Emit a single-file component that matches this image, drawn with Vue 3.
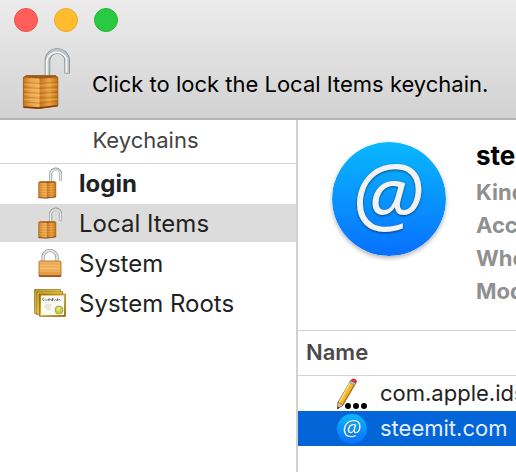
<template>
  <div class="window">
    <svg class="defs" aria-hidden="true">
      <defs>
        <linearGradient id="brass" x1="0" x2="1">
          <stop offset="0" stop-color="#c5761d" />
          <stop offset="0.2" stop-color="#e9a246" />
          <stop offset="0.44" stop-color="#f2b45c" />
          <stop offset="0.5" stop-color="#c97820" />
          <stop offset="0.75" stop-color="#e9a343" />
          <stop offset="1" stop-color="#c06f14" />
        </linearGradient>
        <linearGradient id="front" x1="0" y1="0" x2="0" y2="1">
          <stop offset="0" stop-color="#f2b05a" />
          <stop offset="0.5" stop-color="#f9c06f" />
          <stop offset="1" stop-color="#dd9138" />
        </linearGradient>
        <linearGradient id="sky" x1="0" y1="0" x2="0" y2="1">
          <stop offset="0" stop-color="#09b8fd" />
          <stop offset="1" stop-color="#0870ff" />
        </linearGradient>
        <linearGradient id="gold" x1="0" y1="0" x2="1" y2="1">
          <stop offset="0" stop-color="#a57c08" />
          <stop offset="0.5" stop-color="#e5b832" />
          <stop offset="1" stop-color="#98700a" />
        </linearGradient>
        <symbol id="lock-open" viewBox="0 0 48 64">
          <path d="M25.500 30V14a10 10 0 0 1 20 0V27" fill="none" stroke="#7d8587" stroke-width="5.600" />
          <path d="M25.500 30V14a10 10 0 0 1 20 0V26.500" fill="none" stroke="#bcc4c6" stroke-width="4.200" />
          <path d="M24.800 30V14a10.500 10.500 0 0 1 20 -2V26" fill="none" stroke="#f5f8f8" stroke-width="1.800" />
          <path d="M1 31l3-2h30l2 2v29l-19 2.500L1 61.500z" fill="url(#brass)" stroke="#9b5513" stroke-width="0.800" />
          <path d="M1 31l3-2h30l2 2-18 1z" fill="#9d5b1b" />
          <path d="M1.500 36l16 1 18-1M1.500 41l16 1 18-1M1.500 46l16 1 18-1M1.500 51l16 1 18-1M1.500 56l16 1 18-2" fill="none" stroke="#a9610f" stroke-width="0.900" opacity="0.500" />
          <path d="M1.500 38l16 1 18-1M1.500 43l16 1 18-1M1.500 48l16 1 18-1M1.500 53l16 1 18-1" fill="none" stroke="#ffcf7a" stroke-width="1" opacity="0.400" />
          <path d="M1.500 61l15.500 1 18.500-2.500" fill="none" stroke="#7c3706" stroke-width="1.400" />
        </symbol>
        <symbol id="lock-closed" viewBox="0 0 24 28">
          <path d="M5 13V8.500a7 7 0 0 1 14 0V13" fill="none" stroke="#8e9495" stroke-width="3.200" />
          <path d="M5 13V8.500a7 7 0 0 1 14 0V13" fill="none" stroke="#e4e8e9" stroke-width="1.800" />
          <rect x="1" y="12" width="22" height="15.500" rx="1" fill="url(#front)" stroke="#a9631d" stroke-width="0.800" />
          <path d="M1.500 15h21M1.500 18h21M1.500 21h21M1.500 24h21" stroke="#c37a2b" stroke-width="0.700" opacity="0.500" />
          <path d="M1 27h22" stroke="#803d0c" stroke-width="1.200" />
        </symbol>
        <symbol id="certificates" viewBox="0 0 32 28">
          <g stroke="#6d5204" stroke-width="0.500">
            <path d="M0.500 0.500h26v24h-26z" fill="url(#gold)" />
            <path d="M2.500 2.500h26v23h-26z" fill="url(#gold)" />
            <path d="M5.500 5h26v22.500h-26z" fill="url(#gold)" />
          </g>
          <path d="M2 24V2h24M4 25V4h24" fill="none" stroke="#e9cf62" stroke-width="0.700" />
          <path d="M7 6.500h23v19.500H7z" fill="#fbfaf6" />
          <path d="M10 9c-2 0-2 3 0 2.500l1-1 1 1 1-1 1 1 1-2 0 2 1.500-1.500 1 1.500 1.500-2.500-1 3 1.500-1.500 1 1 1-1 1 1 1-2 0 2 2-1 1 1" fill="none" stroke="#555" stroke-width="0.700" />
          <path d="M11 16h6M10 18h7M12 20h5" stroke="#d8c6bd" stroke-width="0.800" />
          <circle cx="25" cy="21" r="4" fill="#c9cf46" stroke="#8f9a29" stroke-width="0.700" />
          <circle cx="24.500" cy="20" r="2" fill="#e3e583" />
        </symbol>
        <symbol id="pencil-note" viewBox="0 0 32 32">
          <path d="M14.500 3l5 2.500L7 27l-5 3.500 0-6z" fill="#f2b92f" stroke="#6c4a19" stroke-width="0.800" />
          <path d="M14 5L3.500 24" stroke="#ffe27a" stroke-width="1.500" />
          <path d="M18.500 6.500L7 26" stroke="#c37a16" stroke-width="1.300" />
          <path d="M2 24.500l5 2.500-5.500 3.800z" fill="#e6c39c" stroke="#7b5a38" stroke-width="0.600" />
          <path d="M1.500 28.500l2 1-2.500 1.700z" fill="#333" />
          <path d="M13.500 4.500l5 2.800 1.500-2.700-5-2.700z" fill="#b9bfc3" stroke="#70777a" stroke-width="0.500" />
          <path d="M14.800 2.500q2-2.700 4.500-1.200 2.200 1.400 0.500 4z" fill="#d8382e" stroke="#8c2b24" stroke-width="0.500" />
          <circle cx="12" cy="28" r="3" />
          <circle cx="20" cy="28" r="3" />
          <circle cx="28" cy="28" r="3" />
        </symbol>
      </defs>
    </svg>

    <header class="titlebar">
      <div class="lights">
        <button v-for="light in lights" :key="light" type="button" class="light" :class="light" :aria-label="light"></button>
      </div>
      <button type="button" class="lock-toggle">
        <svg class="lock-icon" aria-hidden="true"><use href="#lock-open" /></svg>
        <span>Click to lock the Local Items keychain.</span>
      </button>
    </header>

    <div class="body">
      <nav class="sidebar">
        <h2 class="sidebar-title">Keychains</h2>
        <button
          v-for="item in keychains"
          :key="item.name"
          type="button"
          class="keychain"
          :class="{ selected: item.name === current, default: item.isDefault }"
          @click="current = item.name"
        >
          <span class="keychain-icon">
            <svg :class="item.icon" aria-hidden="true"><use :href="'#' + item.icon" /></svg>
          </span>
          <span>{{ item.name }}</span>
        </button>
      </nav>

      <main class="content">
        <section class="details">
          <svg class="at-large" viewBox="0 0 114 114" aria-hidden="true">
            <circle cx="57" cy="57" r="57" fill="url(#sky)" />
            <text class="at-sign" x="56" y="82" text-anchor="middle">@</text>
          </svg>
          <div class="info">
            <h1>steemit.com</h1>
            <p v-for="label in labels" :key="label">{{ label }}</p>
          </div>
        </section>

        <table class="items">
          <thead>
            <tr><th scope="col">Name</th></tr>
          </thead>
          <tbody>
            <tr v-for="row in rows" :key="row.name" :class="{ active: row.name === selectedItem }" @click="selectedItem = row.name">
              <td>
                <div class="item">
                  <span class="item-icon">
                    <svg v-if="row.icon === 'note'" class="note-icon" aria-hidden="true"><use href="#pencil-note" /></svg>
                    <svg v-else class="at-small" viewBox="0 0 114 114" aria-hidden="true">
                      <circle cx="57" cy="57" r="57" fill="url(#sky)" />
                      <text class="at-sign" x="56" y="82" text-anchor="middle">@</text>
                    </svg>
                  </span>
                  <span class="item-name">{{ row.name }}</span>
                </div>
              </td>
            </tr>
          </tbody>
        </table>
      </main>
    </div>
  </div>
</template>

<script setup>
import { ref } from 'vue'

const lights = ['close', 'minimize', 'zoom']

const keychains = [
  { name: 'login', icon: 'lock-open', isDefault: true },
  { name: 'Local Items', icon: 'lock-open' },
  { name: 'System', icon: 'lock-closed' },
  { name: 'System Roots', icon: 'certificates' }
]
const current = ref('Local Items')

const labels = ['Kind:', 'Account:', 'Where:', 'Modified:']

const rows = [
  { name: 'com.apple.ids', icon: 'note' },
  { name: 'steemit.com', icon: 'at' }
]
const selectedItem = ref('steemit.com')
</script>

<style>
body {
  margin: 0;
  overflow: hidden;
  background: #fff;
}
</style>

<style scoped>
.window {
  display: flex;
  flex-direction: column;
  min-height: 100vh;
  overflow: hidden;
  font-family: Inter, Roboto, sans-serif;
  font-size: 22px;
  color: #222;
  white-space: nowrap;
}

.defs {
  position: absolute;
  width: 0;
  height: 0;
}

button {
  border: 0;
  padding: 0;
  background: none;
  font: inherit;
  color: inherit;
  text-align: left;
}

.titlebar {
  padding: 8px 14px;
  border-bottom: 2px solid #b5b5b5;
  background: linear-gradient(#ececec, #d2d2d2);
}

.lights {
  display: flex;
  gap: 16px;
  height: 24px;
}

.light {
  width: 24px;
  height: 24px;
  border: 1px solid #ee514a;
  border-radius: 50%;
  background: #ff5f58;
}

.light.minimize {
  border-color: #eaab2b;
  background: #ffbd2e;
}

.light.zoom {
  border-color: #22b835;
  background: #29ca41;
}

.lock-toggle {
  display: flex;
  align-items: center;
  gap: 22px;
  margin-top: 15px;
  padding-left: 8px;
  color: #000;
}

.lock-toggle span {
  padding-top: 10px;
}

.lock-icon {
  width: 48px;
  height: 63px;
}

.body {
  display: flex;
  flex: 1;
}

.sidebar {
  display: flex;
  flex-direction: column;
  gap: 2px;
  flex: 0 0 296px;
  border-right: 2px solid #d0d0d0;
}

.sidebar-title {
  margin: 0 0 -2px;
  padding: 0 5px 2px 0;
  border-bottom: 1px solid #d2d2d2;
  font-size: 22px;
  font-weight: 400;
  line-height: 41px;
  text-align: center;
  color: #444;
}

.keychain {
  display: flex;
  align-items: center;
  gap: 12px;
  height: 38px;
  padding-left: 33px;
  font-size: 24px;
}

.keychain.selected {
  background: #dcdcdc;
}

.keychain.default {
  font-weight: 700;
}

.keychain-icon {
  display: flex;
  justify-content: center;
  width: 34px;
}

.lock-open {
  width: 24px;
  height: 32px;
}

.lock-closed {
  width: 24px;
  height: 28px;
}

.certificates {
  width: 32px;
  height: 28px;
}

.content {
  flex: 1;
  min-width: 0;
  overflow: hidden;
}

.details {
  display: flex;
  gap: 30px;
  height: 188px;
  padding: 22px 0 0 34px;
}

.at-large {
  flex: none;
  width: 114px;
  height: 114px;
  border-radius: 50%;
  box-shadow: 0 2px 4px rgba(0, 0, 0, 0.3);
}

.at-sign {
  font-family: "Open Sans", "Noto Sans", sans-serif;
  font-size: 84px;
  font-style: italic;
  fill: #f2f2f2;
  filter: drop-shadow(0 1px 1px rgba(0, 0, 0, 0.5));
}

.info h1 {
  margin: 0 0 6px;
  font-size: 26px;
  font-weight: 700;
  line-height: 28px;
  color: #000;
}

.info p {
  margin: 0;
  font-weight: 700;
  line-height: 33px;
  color: #909090;
}

.items {
  width: 100%;
  border-collapse: collapse;
}

.items th {
  height: 42px;
  padding: 0 8px 2px;
  border-top: 1px solid #d2d2d2;
  border-bottom: 1px solid #d2d2d2;
  font-weight: 600;
  text-align: left;
  color: #4a4a4a;
}

.items td {
  padding: 0;
}

.item {
  display: flex;
  align-items: center;
  gap: 12px;
  height: 35px;
  padding-left: 38px;
}

.item-icon {
  display: flex;
  flex: none;
  justify-content: center;
  width: 32px;
}

.item-name {
  padding-bottom: 2px;
}

.active {
  background: #0465d9;
  color: #e3eefc;
}

.note-icon {
  width: 32px;
  height: 32px;
}

.at-small {
  width: 30px;
  height: 30px;
}
</style>
